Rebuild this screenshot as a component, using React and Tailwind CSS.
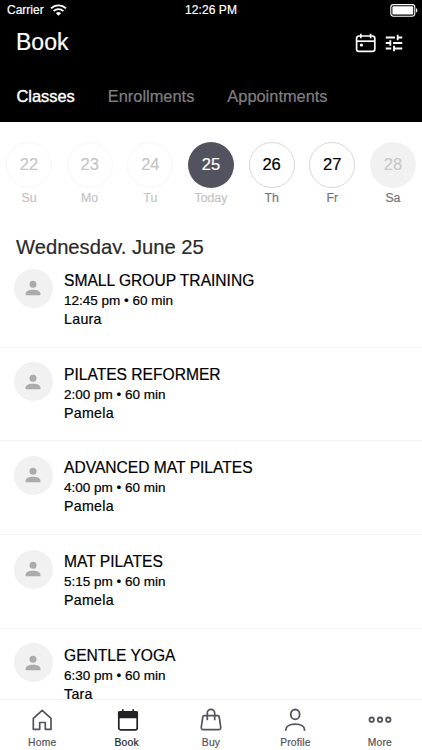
import React, { useState } from "react";

const days = [
  { date: 22, label: "Su", state: "past" },
  { date: 23, label: "Mo", state: "past" },
  { date: 24, label: "Tu", state: "past" },
  { date: 25, label: "Today", state: "today" },
  { date: 26, label: "Th", state: "open" },
  { date: 27, label: "Fr", state: "open" },
  { date: 28, label: "Sa", state: "closed" },
];

const circleStyles = {
  past: "border border-[#f7f7f7] text-[#c6c6c6]",
  today: "bg-[#52535e] text-white",
  open: "border border-[#d9d9d9] text-black",
  closed: "bg-[#f1f1f1] text-[#cacaca]",
};

const labelStyles = {
  past: "text-[#c4c4c4]",
  today: "text-[#c4c4c4]",
  open: "text-[#767676]",
  closed: "text-[#767676]",
};

const classes = [
  { name: "SMALL GROUP TRAINING", time: "12:45 pm", teacher: "Laura" },
  { name: "PILATES REFORMER", time: "2:00 pm", teacher: "Pamela" },
  { name: "ADVANCED MAT PILATES", time: "4:00 pm", teacher: "Pamela" },
  { name: "MAT PILATES", time: "5:15 pm", teacher: "Pamela" },
  { name: "GENTLE YOGA", time: "6:30 pm", teacher: "Tara" },
];

const StatusBar = () => (
  <div className="grid h-5 grid-cols-[1fr_auto_1fr] items-center pr-1 pl-[7px] text-[12px] leading-5">
    <div className="flex items-center gap-[6px]">
      <span>Carrier</span>
      <svg width="17" height="12" viewBox="0 0 17 12" fill="none" stroke="white">
        <path d="M1 4.4a10.7 10.7 0 0 1 15 0" strokeWidth="1.9" />
        <path d="M3.6 7.1a7 7 0 0 1 9.8 0" strokeWidth="1.9" />
        <path d="M8.5 11.8 5.9 9.2a3.7 3.7 0 0 1 5.2 0z" fill="white" stroke="none" />
      </svg>
    </div>
    <span className="pr-[3px] text-center tracking-[0.1px]">12:26 PM</span>
    <svg className="justify-self-end" width="28" height="13" viewBox="0 0 28 13">
      <rect x="0.8" y="0.6" width="24" height="11.6" rx="2.6" fill="none" stroke="white" strokeWidth="1.1" />
      <rect x="2.4" y="2.2" width="20.8" height="8.4" rx="1.2" fill="white" />
      <path d="M26 4.3c1.8.5 1.8 3.7 0 4.2z" fill="white" />
    </svg>
  </div>
);

const CalendarIcon = () => (
  <svg width="22" height="20" viewBox="0 0 22 20" fill="none" stroke="white" strokeWidth="1.7">
    <rect x="1.6" y="3" width="18.2" height="15.4" rx="2.4" />
    <path d="M1.6 8.2h18.2" />
    <path d="M5.8 0.8v4.4M15.6 0.8v4.4" />
    <circle cx="6.4" cy="12" r="1.6" fill="white" stroke="none" />
  </svg>
);

const FilterIcon = () => (
  <svg width="22" height="22" viewBox="0 0 24 24" fill="white">
    <path d="M3 17v2h6v-2H3zM3 5v2h10V5H3zm10 16v-2h8v-2h-8v-2h-2v6h2zM7 9v2H3v2h4v2h2V9H7zm14 4v-2H11v2h10zm-6-4h2V7h4V5h-4V3h-2v6z" />
  </svg>
);

const Avatar = () => (
  <div className="flex h-[39px] w-[39px] shrink-0 items-center justify-center rounded-full bg-[#f1f1f1]">
    <svg width="16" height="16" viewBox="0 0 16 16" fill="#ababab">
      <circle cx="8" cy="4.2" r="3.5" />
      <path d="M0.6 15.2v-1.6c0-2.4 3.4-3.8 7.4-3.8s7.4 1.4 7.4 3.8v1.6z" />
    </svg>
  </div>
);

const ClassRow = ({ item }) => (
  <li className="flex h-[93.7px] shrink-0 border-b border-[#f5f5f5] pl-[13.5px]">
    <div className="pt-[14.5px]">
      <Avatar />
    </div>
    <div className="pt-[17px] pl-[11.5px] text-black">
      <h3 className="text-[15.6px] leading-5">{item.name}</h3>
      <p className="text-[13.5px] leading-5">{item.time} • 60 min</p>
      <p className="text-[14.2px] leading-[17px] tracking-[0.3px]">{item.teacher}</p>
    </div>
  </li>
);

const HomeIcon = () => (
  <svg width="24" height="24" viewBox="0 0 24 24" fill="none" stroke="#52535e" strokeWidth="1.7">
    <path d="M3.3 10.4 12.2 2.4l8.8 8v10.9h-5.7v-6.8H9.7v6.8H3.3z" strokeLinejoin="round" />
  </svg>
);

const BookIcon = () => (
  <svg width="24" height="24" viewBox="0 0 24 24" fill="none" stroke="#212126" strokeWidth="1.7">
    <rect x="3.8" y="3.8" width="18.4" height="18" rx="1.8" />
    <path d="M3.8 4.2h18.4v5.2H3.8z" fill="#212126" strokeLinejoin="round" />
    <path d="M7.8 1.2v3M18.2 1.2v3" />
  </svg>
);

const BuyIcon = () => (
  <svg width="24" height="24" viewBox="0 0 24 24" fill="none" stroke="#52535e" strokeWidth="1.7">
    <path d="M5.2 7.6h13.6c.9 0 1.3.4 1.4 1.2l1.5 10.4c.2 1.5-.5 2.5-2 2.5H4.3c-1.5 0-2.2-1-2-2.5L3.8 8.8c.1-.8.5-1.2 1.4-1.2z" />
    <path d="M8.3 12.2V5a3.7 3.7 0 0 1 7.4 0v7.2" />
  </svg>
);

const ProfileIcon = () => (
  <svg width="24" height="24" viewBox="0 0 24 24" fill="none" stroke="#52535e" strokeWidth="1.8">
    <ellipse cx="12.2" cy="6.4" rx="4.4" ry="4.9" />
    <path d="M2.8 22.8v-.8c0-3.5 3.6-5.9 9.4-5.9s9.4 2.4 9.4 5.9v.8" />
  </svg>
);

const MoreIcon = () => (
  <svg width="24" height="24" viewBox="0 0 24 24" fill="none" stroke="#52535e" strokeWidth="1.8">
    <circle cx="3.7" cy="11.7" r="2.2" />
    <circle cx="12" cy="11.7" r="2.2" />
    <circle cx="20.3" cy="11.7" r="2.2" />
  </svg>
);

const navItems = [
  { label: "Home", Icon: HomeIcon },
  { label: "Book", Icon: BookIcon },
  { label: "Buy", Icon: BuyIcon },
  { label: "Profile", Icon: ProfileIcon },
  { label: "More", Icon: MoreIcon },
];

const App = () => {
  const [tab, setTab] = useState("Classes");

  return (
    <div className="flex h-[750px] w-[422px] flex-col overflow-hidden bg-white font-['Liberation_Sans',Arial,sans-serif] [-webkit-text-stroke:0.2px]">
      <header className="h-[122px] shrink-0 bg-black text-white">
        <StatusBar />
        <div className="flex h-[45px] items-center justify-between pr-[17.5px] pl-4">
          <h1 className="text-[23px] leading-[45px]">Book</h1>
          <div className="flex items-center gap-[5.5px]">
            <CalendarIcon />
            <FilterIcon />
          </div>
        </div>
        <nav className="flex gap-[33px] pt-[19px] pl-[16.5px] text-[16.4px] leading-6">
          {["Classes", "Enrollments", "Appointments"].map((name) => (
            <button
              key={name}
              onClick={() => setTab(name)}
              className={
                tab === name
                  ? "text-white [-webkit-text-stroke:0.4px]"
                  : "text-[#808080]"
              }
            >
              {name}
            </button>
          ))}
        </nav>
      </header>

      <div className="flex shrink-0 justify-between pt-[19.5px] pr-[6px] pl-[6px]">
        {days.map((day) => (
          <div key={day.date} className="flex w-[46px] flex-col items-center">
            <div
              className={`flex h-[46px] w-[46px] items-center justify-center rounded-full text-[16.5px] ${circleStyles[day.state]}`}
            >
              {day.date}
            </div>
            <span className={`mt-[2.5px] text-[12.3px] leading-4 ${labelStyles[day.state]}`}>
              {day.label}
            </span>
          </div>
        ))}
      </div>

      <h2 className="mt-[28.5px] h-[19.5px] shrink-0 overflow-hidden pl-4 text-[20.2px] leading-6 text-[#2a2a2a]">
        Wednesday, June 25
      </h2>

      <ul className="flex min-h-0 flex-1 flex-col overflow-hidden">
        {classes.map((item) => (
          <ClassRow key={item.name} item={item} />
        ))}
      </ul>

      <nav className="flex h-[51px] shrink-0 border-t border-[#f3f3f3] bg-white">
        {navItems.map(({ label, Icon }) => (
          <button key={label} className="flex flex-1 flex-col items-center pt-2">
            <Icon />
            <span
              className={`mt-[5px] text-[10.3px] leading-3 tracking-[0.2px] ${label === "Book" ? "text-[#212126]" : "text-[#52535e]"}`}
            >
              {label}
            </span>
          </button>
        ))}
      </nav>
    </div>
  );
};

export default App;
